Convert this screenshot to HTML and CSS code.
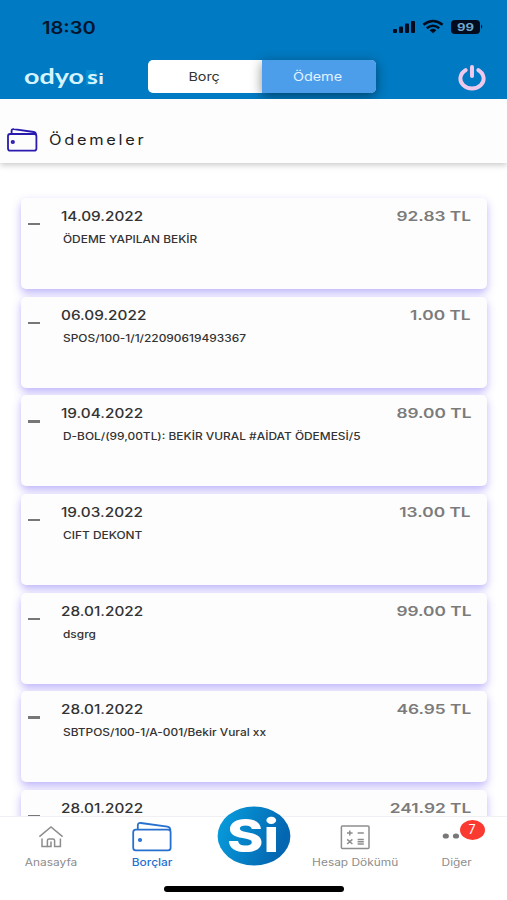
FILE: index.html
```html
<!DOCTYPE html>
<html lang="tr">
<head>
    <meta charset="UTF-8">
    <meta name="viewport" content="width=device-width, initial-scale=1.0">
    <title>Ödemeler</title>
    <link rel="stylesheet" href="styles.css">
</head>
<body>
    <div class="app">
        <header class="header">
            <div class="status-bar">
                <span class="clock">18:30</span>
                <svg class="status-icons" width="92" height="16" viewBox="0 0 92 16">
                    <rect x="1" y="10" width="4" height="4" rx="1"/>
                    <rect x="7" y="7.5" width="4" height="6.5" rx="1"/>
                    <rect x="13" y="4.5" width="4" height="9.5" rx="1"/>
                    <rect x="19" y="2" width="4" height="12" rx="1"/>
                    <g fill="none" stroke="#030b1c" stroke-width="2.4">
                        <path d="M31.4 5.8 Q41 -1.8 50.6 5.8"/>
                        <path d="M34.8 9.2 Q41 4.2 47.2 9.2"/>
                    </g>
                    <path d="M37.6 11.2 Q41 8.4 44.4 11.2 L41 14.2 Z"/>
                    <rect x="59" y="1" width="29" height="14" rx="4"/>
                    <path d="M89 5.5 Q91.6 7.7 89 10 Z"/>
                    <text class="battery-text" x="65" y="11.8" textLength="17" lengthAdjust="spacingAndGlyphs">99</text>
                </svg>
            </div>
            <div class="nav-bar">
                <svg class="brand" width="84" height="26" viewBox="0 0 84 26">
                    <rect x="62" y="3" width="10" height="15" fill="#078cd2"/>
                    <text class="brand-odyo" x="0" y="17" textLength="60" lengthAdjust="spacingAndGlyphs">odyo</text>
                    <text class="brand-si" x="63" y="17" textLength="17" lengthAdjust="spacingAndGlyphs">Si</text>
                </svg>
                <div class="segment">
                    <div class="segment-item"><span>Borç</span></div>
                    <div class="segment-item active"><span>Ödeme</span></div>
                </div>
                <svg class="power" width="28" height="26" viewBox="0 0 28 26">
                    <path d="M7.6 5.2 A11.6 10 0 1 0 20.4 5.2" />
                    <path d="M14 2 V11" />
                </svg>
            </div>
        </header>

        <div class="title-bar">
            <svg class="title-icon" width="32" height="24" viewBox="0 0 32 24">
                <rect x="2" y="6" width="28.4" height="16.6" rx="2.2"/>
                <path d="M5.6 5.8 V2.8 Q5.6 .8 7.8 1.2 L27.8 4 Q30 4.4 30 7"/>
                <circle cx="6.8" cy="14" r="1.2"/>
            </svg>
            <h1 class="title">Ödemeler</h1>
        </div>

        <main class="list">
            <div class="card">
                <i class="minus"></i>
                <div class="info"><div class="date">14.09.2022</div><div class="desc">ÖDEME YAPILAN BEKİR</div></div>
                <div class="amount">92.83 TL</div>
            </div>
            <div class="card">
                <i class="minus"></i>
                <div class="info"><div class="date">06.09.2022</div><div class="desc">SPOS/100-1/1/22090619493367</div></div>
                <div class="amount">1.00 TL</div>
            </div>
            <div class="card">
                <i class="minus"></i>
                <div class="info"><div class="date">19.04.2022</div><div class="desc">D-BOL/(99,00TL): BEKİR VURAL #AİDAT ÖDEMESİ/5</div></div>
                <div class="amount">89.00 TL</div>
            </div>
            <div class="card">
                <i class="minus"></i>
                <div class="info"><div class="date">19.03.2022</div><div class="desc">CIFT DEKONT</div></div>
                <div class="amount">13.00 TL</div>
            </div>
            <div class="card">
                <i class="minus"></i>
                <div class="info"><div class="date">28.01.2022</div><div class="desc">dsgrg</div></div>
                <div class="amount">99.00 TL</div>
            </div>
            <div class="card">
                <i class="minus"></i>
                <div class="info"><div class="date">28.01.2022</div><div class="desc">SBTPOS/100-1/A-001/Bekir Vural xx</div></div>
                <div class="amount">46.95 TL</div>
            </div>
            <div class="card">
                <i class="minus"></i>
                <div class="info"><div class="date">28.01.2022</div></div>
                <div class="amount">241.92 TL</div>
            </div>
        </main>

        <footer class="footer">
            <nav class="tabs">
                <div class="tab">
                    <svg class="tab-icon" width="40" height="32" viewBox="0 0 40 32">
                        <path d="M8.4 15.6 L20 6 L31.6 15.6"/>
                        <path d="M11 17.5 V25.6 H16.4 V19.4 Q16.4 18 18 18 H22 Q23.6 18 23.6 19.4 V25.6 H29.4 V17.5"/>
                        <path d="M20 20.5 V25.6 H16.4"/>
                    </svg>
                    <span class="tab-label">Anasayfa</span>
                </div>
                <div class="tab active">
                    <svg class="tab-icon" width="42" height="32" viewBox="0 0 42 32">
                        <rect x="2.2" y="8.6" width="37.4" height="20.8" rx="2.6"/>
                        <path d="M6.8 8.4 V4.4 Q6.8 1.6 9.8 2 L36.4 5.6 Q39.4 6 39.4 9.6"/>
                        <circle cx="9" cy="19" r="1.2"/>
                    </svg>
                    <span class="tab-label">Borçlar</span>
                </div>
                <div class="tab">
                    <svg class="logo" width="74" height="60" viewBox="0 0 74 60">
                        <defs>
                            <linearGradient id="logoFill" x1="0" y1="0" x2="1" y2="0.3">
                                <stop offset="0" stop-color="#07a0df"/>
                                <stop offset="1" stop-color="#0465b0"/>
                            </linearGradient>
                        </defs>
                        <ellipse cx="37" cy="30" rx="36.4" ry="29.6" fill="url(#logoFill)"/>
                        <text class="logo-text" x="10" y="46" textLength="52" lengthAdjust="spacingAndGlyphs">Si</text>
                    </svg>
                </div>
                <div class="tab">
                    <svg class="tab-icon" width="40" height="32" viewBox="0 0 40 32">
                        <rect x="6.4" y="5" width="27.6" height="22.6" rx="1"/>
                        <path d="M12 12 H17.6 M14.8 9.4 V14.6 M22.6 12 H28.8 M12.2 18.4 L17.4 23 M17.4 18.4 L12.2 23 M22.6 18.4 H28.8 M22.6 20.7 H28.8 M22.6 23 H28.8"/>
                    </svg>
                    <span class="tab-label">Hesap Dökümü</span>
                </div>
                <div class="tab">
                    <svg class="tab-icon dots" width="40" height="32" viewBox="0 0 40 32">
                        <ellipse cx="9.8" cy="15" rx="3.1" ry="2.6"/>
                        <ellipse cx="20" cy="15" rx="3.1" ry="2.6"/>
                    </svg>
                    <span class="badge">7</span>
                    <span class="tab-label">Diğer</span>
                </div>
            </nav>
            <div class="home-indicator"></div>
        </footer>
    </div>
</body>
</html>
```
FILE: styles.css
```css
* {
    box-sizing: border-box;
}
body {
    margin: 0;
    font-family: Inter, "Liberation Sans", sans-serif;
    background: #fff;
}
.app {
    display: flex;
    flex-direction: column;
    height: 900px;
    overflow: hidden;
}
.header {
    flex: none;
    height: 99px;
    background: #007ac2;
}
.status-bar {
    display: flex;
    justify-content: space-between;
    height: 55px;
    padding: 18px 23px 0 42px;
}
.clock {
    font-size: 17px;
    line-height: 20px;
    font-weight: 600;
    color: #03152e;
    transform: scaleX(1.18);
    transform-origin: left;
}
.status-icons {
    margin-top: 1px;
    fill: #030b1c;
}
.battery-text {
    font-size: 10.5px;
    font-weight: 700;
    fill: #6fa9d2;
}
.nav-bar {
    display: flex;
    align-items: flex-start;
    padding: 5px 21px 0 24px;
}
.brand {
    margin-top: 7px;
    fill: #d5f4ff;
    overflow: visible;
}
.brand-odyo {
    font-family: Lato, sans-serif;
    font-size: 20px;
    font-weight: 700;
}
.brand-si {
    font-family: "Open Sans", sans-serif;
    font-size: 15px;
    font-weight: 700;
}
.segment {
    display: flex;
    width: 228px;
    height: 33px;
    margin-left: 40px;
    border-radius: 5px;
    background: #fff;
}
.segment-item {
    width: 114px;
    line-height: 33px;
    font-size: 12px;
    text-align: center;
    color: #333;
}
.segment-item span {
    display: inline-block;
    transform: translateX(-1px) scaleX(1.2);
}
.segment-item.active {
    background: #4c9eeb;
    color: #e2f2ff;
    border-radius: 0 5px 5px 0;
    box-shadow: 0 3px 12px rgba(0, 0, 0, 0.45);
}
.power {
    margin: 5px 0 0 auto;
    fill: none;
    stroke: #eec9ec;
    stroke-width: 4;
    stroke-linecap: round;
}
.title-bar {
    flex: none;
    display: flex;
    align-items: center;
    height: 64px;
    padding: 17px 6px 0;
    background: #fdfdfd;
    box-shadow: 0 2px 6px rgba(0, 0, 0, 0.22);
    clip-path: inset(0 0 -12px 0);
}
.title-icon {
    fill: none;
    stroke: #2a1ab0;
    stroke-width: 1.8;
}
.title {
    margin: 0 0 0 11px;
    font-size: 14.5px;
    font-weight: 400;
    letter-spacing: 2.4px;
    color: #222;
    transform: scaleX(1.13);
    transform-origin: left;
}
.list {
    display: flex;
    flex-direction: column;
    gap: 7.7px;
    height: 653px;
    padding: 35px 20px 0 21px;
    overflow: hidden;
}
.card {
    flex: none;
    display: flex;
    height: 91px;
    border-radius: 5px;
    background: #fdfdfd;
    box-shadow: 0 4px 9px rgba(110, 90, 245, 0.45);
}
.minus {
    width: 12px;
    height: 2.4px;
    margin: 25px 0 0 7px;
    background: #777;
}
.info {
    flex: 1;
    padding: 9px 0 0 21px;
}
.date {
    font-size: 13px;
    line-height: 18px;
    font-weight: 500;
    color: #333;
    transform: scaleX(1.18);
    transform-origin: left;
}
.desc {
    margin: 6px 0 0 2px;
    font-size: 10px;
    line-height: 16px;
    font-weight: 500;
    color: #333;
    white-space: nowrap;
    transform: scaleX(1.19);
    transform-origin: left;
}
.amount {
    padding: 9px 16px 0 0;
    font-size: 13px;
    line-height: 18px;
    font-weight: 600;
    color: #7b7b7b;
    transform: scaleX(1.33);
    transform-origin: calc(100% - 16px) 50%;
}
.footer {
    position: relative;
    flex: none;
    height: 84px;
    background: #fff;
    border-top: 1px solid #f0f0f4;
}
.tabs {
    display: flex;
    height: 69px;
}
.tab {
    position: relative;
    flex: 1;
    display: flex;
    flex-direction: column;
    align-items: center;
    padding-top: 4px;
    color: #8d8d8d;
}
.tab.active {
    color: #2671cf;
}
.tab-icon {
    fill: none;
    stroke: currentColor;
    stroke-width: 1.5;
}
.tab.active .tab-icon {
    stroke-width: 1.8;
}
.tab-icon.dots {
    fill: #777;
    stroke: none;
}
.tab-label {
    margin-top: 2px;
    font-size: 10px;
    line-height: 14px;
    white-space: nowrap;
    transform: scaleX(1.19);
}
.tab.active .tab-label {
    font-weight: 500;
}
.logo {
    margin-top: -15px;
}
.logo-text {
    font-size: 45px;
    font-weight: 800;
    fill: #fff;
}
.badge {
    position: absolute;
    top: 3px;
    left: 54px;
    width: 25px;
    height: 20px;
    border-radius: 50%;
    background: #fa3a30;
    color: #fff;
    font-size: 12.5px;
    line-height: 19px;
    text-align: center;
}
.home-indicator {
    width: 180px;
    height: 6px;
    margin: 0 0 0 164px;
    border-radius: 3px;
    background: #000;
}
```
